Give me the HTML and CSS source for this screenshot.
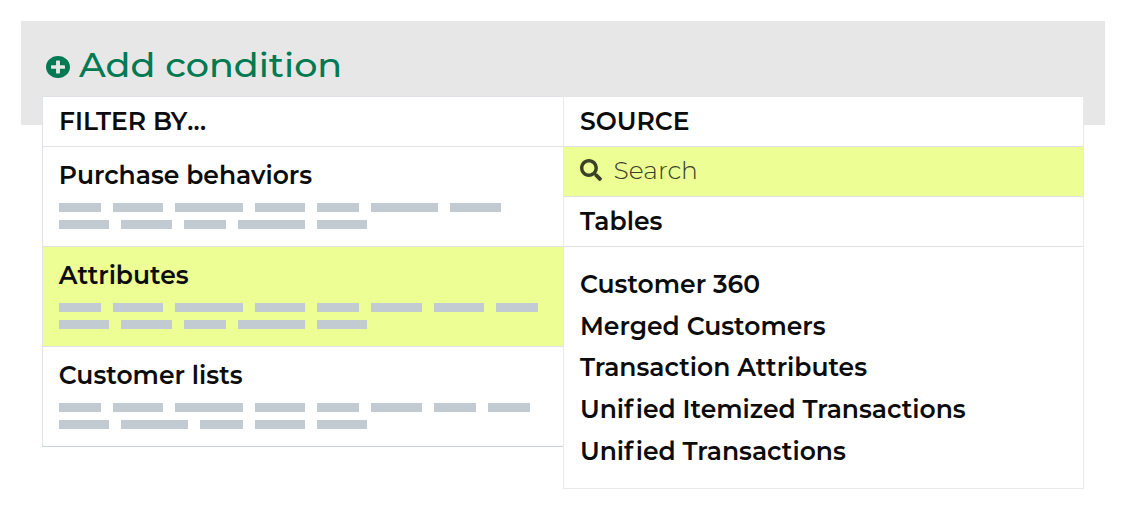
FILE: index.html
```html
<!DOCTYPE html>
<html lang="en">
<head>
<meta charset="utf-8">
<title>Add condition</title>
<link rel="stylesheet" href="styles.css">
</head>
<body>
<main class="page">
  <header class="bar">
    <svg class="plus" viewBox="8 8 496 496" preserveAspectRatio="none"><path fill="currentColor" d="M256 8C119 8 8 119 8 256s111 248 248 248 248-111 248-248S393 8 256 8zm144 276c0 6.600-5.400 12-12 12h-92v92c0 6.600-5.400 12-12 12h-56c-6.600 0-12-5.400-12-12v-92h-92c-6.600 0-12-5.400-12-12v-56c0-6.600 5.400-12 12-12h92v-92c0-6.600 5.400-12 12-12h56c6.600 0 12 5.400 12 12v92h92c6.600 0 12 5.400 12 12v56z"/></svg>
    <span class="title">Add condition</span>
  </header>
  <div class="menu">
    <section class="filters">
      <h2 class="head"><span>FILTER BY<span class="dots">...</span></span></h2>
      <div class="option">
        <h3 class="name">Purchase behaviors</h3>
        <div class="line"><i class="s"></i><i class="m"></i><i class="l"></i><i class="m"></i><i class="s"></i><i class="l"></i><i class="m"></i></div>
        <div class="line"><i class="m"></i><i class="m"></i><i class="s"></i><i class="l"></i><i class="m"></i></div>
      </div>
      <div class="option active">
        <h3 class="name">Attributes</h3>
        <div class="line"><i class="s"></i><i class="m"></i><i class="l"></i><i class="m"></i><i class="s"></i><i class="m"></i><i class="m"></i><i class="s"></i></div>
        <div class="line"><i class="m"></i><i class="m"></i><i class="s"></i><i class="l"></i><i class="m"></i></div>
      </div>
      <div class="option">
        <h3 class="name">Customer lists</h3>
        <div class="line"><i class="s"></i><i class="m"></i><i class="l"></i><i class="m"></i><i class="s"></i><i class="m"></i><i class="s"></i><i class="s"></i></div>
        <div class="line"><i class="m"></i><i class="l"></i><i class="s"></i><i class="m"></i><i class="m"></i></div>
      </div>
    </section>
    <section class="source">
      <h2 class="head"><span>SOURCE</span></h2>
      <div class="head active search">
        <svg class="glass" viewBox="0 0 512 512"><path fill="currentColor" d="M505 442.700L405.300 343c-4.500-4.500-10.600-7-17-7H372c27.600-35.300 44-79.700 44-128C416 93.100 322.900 0 208 0S0 93.100 0 208s93.100 208 208 208c48.300 0 92.700-16.400 128-44v16.300c0 6.400 2.500 12.500 7 17l99.700 99.700c9.400 9.400 24.600 9.400 33.900 0l28.300-28.300c9.400-9.400 9.400-24.600.1-34zM208 336c-70.700 0-128-57.200-128-128 0-70.700 57.200-128 128-128 70.700 0 128 57.200 128 128 0 70.700-57.200 128-128 128z"/></svg>
        <span>Search</span>
      </div>
      <h2 class="head"><span>Tables</span></h2>
      <ul class="tables">
        <li>Customer 360</li>
        <li>Merged Customers</li>
        <li>Transaction Attributes</li>
        <li>Uni<span class="f">f</span>ied Itemized Transactions</li>
        <li>Uni<span class="f">f</span>ied Transactions</li>
      </ul>
    </section>
  </div>
</main>
</body>
</html>
```
FILE: styles.css
```css
* { box-sizing: border-box; }
body {
  margin: 0;
  background: #fff;
  color: #0c0c0c;
  font: 600 25px/30px Montserrat, Inter, sans-serif;
}
h2, h3, ul { margin: 0; padding: 0; font: inherit; list-style: none; }
span, h3 { white-space: nowrap; }
.page { padding: 21px 21px 0 21.300px; height: 509px; overflow: hidden; }
.bar {
  display: flex;
  gap: 9px;
  height: 104.400px;
  padding: 22px 24.500px 0;
  background: #e7e7e7;
  color: #007a52;
}
.plus { width: 24px; height: 22px; margin-top: 13px; flex: none; }
.title {
  font-size: 33px;
  line-height: 44px;
  font-weight: 500;
  transform: scaleX(1.107);
  transform-origin: 0 50%;
}
.menu {
  display: grid;
  grid-template-columns: 521px 521px;
  align-items: start;
  width: 1042px;
  margin: -29.400px 0 0 20.700px;
}
.filters, .source { background: #fff; border: 1px solid #dfe3e7; }
.filters { border-right: 0; border-bottom-color: #cbd3da; }
.source { height: 392.500px; width: 521.500px; border-color: #e3e6e9 #e8e9eb #e8e9eb #e8e9eb; }
.head {
  display: flex;
  align-items: center;
  height: 50px;
  padding: 0 16px 2px;
  border-bottom: 1px solid #dfe1e4;
}
.dots { letter-spacing: 0.300px; }
.option { height: 100px; padding: 13px 15.800px 0; border-bottom: 1px solid #dfe1e4; }
.option:last-child { height: 99px; border: 0; }
.name { height: 43px; line-height: 30px; }
.active { background: #edff94; }
.line { display: flex; gap: 12.080px; height: 9px; margin-bottom: 7.500px; }
.line i { background: #c2cad2; }
.s { width: 42.100px; }
.m { width: 50.400px; }
.l { width: 67.100px; }
.search { color: #3b4127; font-weight: 300; gap: 12px; padding: 0 15.600px 3px; }
.glass { width: 22px; height: 22px; }
.tables { padding: 17px 16px; line-height: 41.700px; }
/* opens the f–i pair so the two letters stay apart */
.f { letter-spacing: 2.400px; }
```
